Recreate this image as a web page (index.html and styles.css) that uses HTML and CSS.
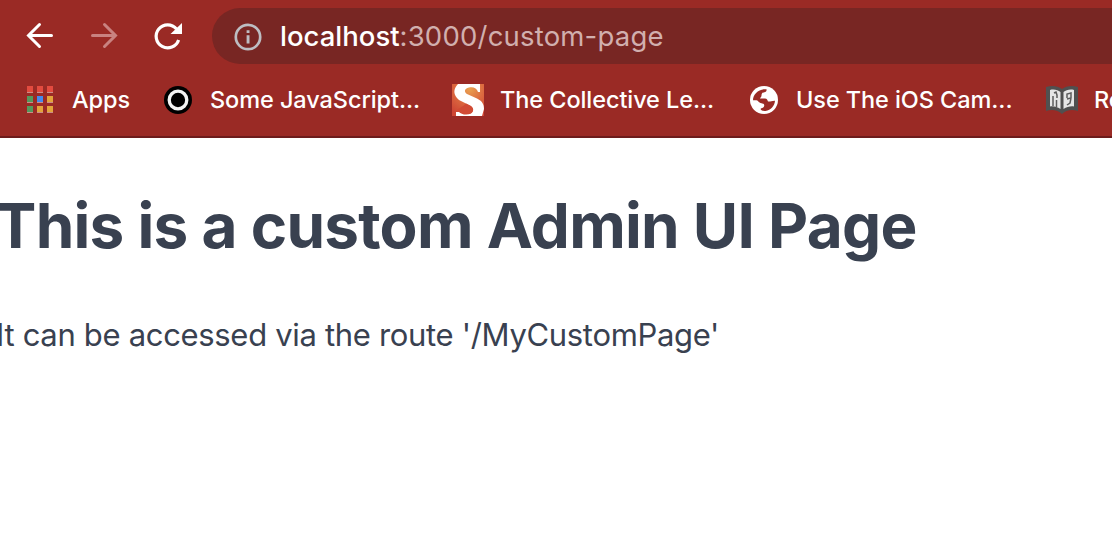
FILE: index.html
```html
<!DOCTYPE html>
<html lang="en">
<head>
<meta charset="utf-8">
<title>Custom page</title>
<link rel="stylesheet" href="styles.css">
</head>
<body>
<header class="chrome">
  <div class="toolbar">
    <svg class="nav-icon" width="28" height="28" viewBox="0 0 28 28"><path d="M25.500 13.500H3M13.500 2.500 2.500 13.500l11 11" fill="none" stroke="#fff" stroke-width="3" stroke-linecap="round"/></svg>
    <svg class="nav-icon forward" width="28" height="28" viewBox="0 0 28 28"><path d="M2.500 13.500H25M14.500 2.500 25.500 13.500l-11 11" fill="none" stroke="#c98280" stroke-width="3" stroke-linecap="round"/></svg>
    <svg class="nav-icon reload" width="28" height="28" viewBox="0 0 28 28"><path d="M22.500 7A11.500 11.500 0 1 0 24.600 17.900" fill="none" stroke="#fff" stroke-width="3.200"/><path d="M28 1V12H16.500z" fill="#fff"/></svg>
    <div class="address">
      <svg class="info" width="28" height="28" viewBox="0 0 28 28"><circle cx="14" cy="14" r="12.200" fill="none" stroke="#bdbdc2" stroke-width="2.700"/><path d="M12.600 7.200h2.900v2.900h-2.900zM12.600 12.300h2.900v8.200h-2.900z" fill="#bdbdc2"/></svg>
      <span class="url"><span class="host">localhost</span>:3000/custom-page</span>
    </div>
  </div>
  <nav class="bookmarks">
    <a class="bookmark apps">
      <svg width="28" height="28" viewBox="0 0 28 28">
        <path d="M1 6h6v1H1zM11 6h6v1h-6zM21 6h6v1h-6zM1 16h6v1H1zM11 16h6v1h-6zM21 16h6v1h-6zM1 26h6v1H1zM11 26h6v1h-6zM21 26h6v1h-6z" fill="#cd8c86"/>
        <path d="M1 0h6v6H1zM11 0h6v6h-6zM21 0h6v6h-6z" fill="#e34b3f"/>
        <path d="M1 10h6v6H1zM1 20h6v6H1z" fill="#55995d"/><path d="M11 10h6v6h-6z" fill="#4489ed"/>
        <path d="M21 10h6v6h-6zM11 20h6v6h-6zM21 20h6v6h-6z" fill="#e3a33b"/>
      </svg>
      <span class="label">Apps</span>
    </a>
    <a class="bookmark script">
      <svg width="28" height="28" viewBox="0 0 28 28"><circle cx="14" cy="14" r="14" fill="#000"/><circle cx="14" cy="14" r="8.800" fill="none" stroke="#f4f4f4" stroke-width="3.300"/></svg>
      <span class="label">Some JavaScript...</span>
    </a>
    <a class="bookmark collective">
      <svg width="32" height="32" viewBox="0 0 32 32">
        <defs><radialGradient id="flame" cx="0.550" cy="0.150" r="0.850"><stop offset="0" stop-color="#eaa251"/><stop offset="0.500" stop-color="#dc6b40"/><stop offset="1" stop-color="#ce4634"/></radialGradient></defs>
        <rect width="32" height="32" fill="url(#flame)"/>
        <path d="M6 0H28V8H26C25 4 21 2.500 17 3.500C12 4.500 12 8 15 10L25 14.500C31 17.500 32 21 32 25L30 32H4V28H7C9 30.500 15 31.500 19 29.500C22 27.500 22 24 18 21.500L7 16C1 11 1 5 6 0Z" fill="#fff"/>
        <path d="M5 26C9 29 12 30 17 30C21 29 23 25 19 22L14 19.500L11 22Z" fill="#d14b35"/>
      </svg>
      <span class="label">The Collective Le...</span>
    </a>
    <a class="bookmark camera">
      <svg width="28" height="28" viewBox="0 0 28 28"><circle cx="14" cy="14" r="14" fill="#fff"/><path d="M16.500 3.200C16.800 5 16 6 14.400 6.300C12.400 6.500 11.500 7.500 11.500 9.500C11.500 11 10.300 11.500 10 12.500H15C17 12.500 17.500 14 18 15.500C20 16 21.500 14.700 25 14.800C24.500 20 21 24.200 15.500 25C13 25.300 10.600 24.500 10.600 22.800C11.500 22 13 22.300 14 20.500C14.800 18.500 13.500 17.500 11.500 17.200C8.500 16.700 8.500 14.400 6.500 14.200H3C3 8 9 2.600 16.500 3.200Z" fill="#9a2a25"/></svg>
      <span class="label">Use The iOS Cam...</span>
    </a>
    <a class="bookmark book">
      <svg width="32" height="30" viewBox="0 0 32 30">
        <path d="M0 2C6 0 12 1 16 4C20 1 26 0 32 2V26C26 24 20 25 16 29C12 25 6 24 0 26Z" fill="#505050"/>
        <path d="M4 5C8 4 12 5 14.500 7V24C11 22 8 21 4 21.500ZM17.500 7C20 5 24 4 28 5V21.500C24 21 21 22 17.500 24Z" fill="#e6e6e6"/>
        <path d="M7 21V11M8 8l2-1 1 3v3M10.500 15v7M21 13V9l4-1v5l-4 1M25 13l-1 5-3 2" fill="none" stroke="#5c5c5c" stroke-width="1.500"/>
      </svg>
      <span class="label">Re</span>
    </a>
  </nav>
</header>
<main class="page">
  <h1 class="title">This is a custom Admin UI Page</h1>
  <p class="text">It can be accessed via the route '/MyCustomPage'</p>
</main>
</body>
</html>
```
FILE: styles.css
```css
* { box-sizing: border-box; }
body { margin: 0; height: 558px; overflow: hidden; background: #fff; font-family: Inter, "Liberation Sans", sans-serif; }
svg { display: block; flex: none; overflow: visible; }
.chrome { height: 138px; overflow: hidden; background: #9a2a25; border-bottom: 2px solid #6d1c1c; }
.toolbar { display: flex; align-items: center; height: 72px; padding-left: 26px; }
.forward { margin-left: 36px; }
.reload { margin-left: 36px; }
.address { display: flex; align-items: center; flex: 1; height: 56px; margin-left: 30px; padding-left: 22px; border-radius: 28px 0 0 28px; background: #782623; }
.info { margin-top: 1px; }
.url { margin-left: 18px; color: #d1afae; font-size: 27.500px; line-height: 32px; letter-spacing: 0.200px; white-space: nowrap; }
.host { color: #fff; font-weight: 500; letter-spacing: 0; }
.bookmarks { display: flex; align-items: center; height: 56px; padding-left: 26px; }
.bookmark { display: flex; align-items: center; flex: none; color: #fff; font-size: 23.500px; line-height: 30px; font-weight: 500; letter-spacing: -0.080px; white-space: nowrap; }
.label { margin-left: 18px; }
.apps { width: 138px; }
.script { width: 288px; }
.collective { width: 298px; }
.collective .label { margin-left: 16px; }
.camera { width: 296px; }
.book .label { margin-left: 16px; }
.page { display: flex; flex-direction: column; color: #394150; white-space: nowrap; }
.title { margin: 50px 0 0 -5px; font-size: 62px; line-height: 76px; font-weight: 700; letter-spacing: -0.740px; }
.text { margin: 51px 0 0 -4px; font-size: 31px; line-height: 40px; letter-spacing: -0.320px; }
```
